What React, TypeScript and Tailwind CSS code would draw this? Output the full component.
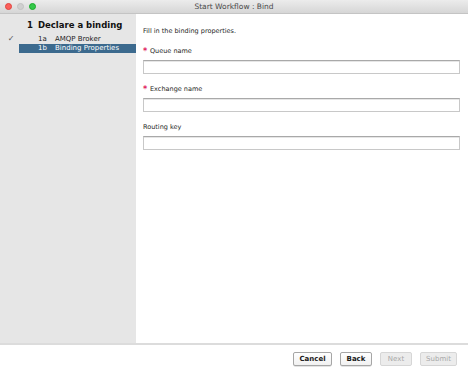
import React from "react";

const font = { fontFamily: '"DejaVu Sans", "Liberation Sans", sans-serif' };

function Field({ label, required }: { label: string; required?: boolean }) {
  return (
    <div className="flex flex-col">
      <div className="flex h-[9px] items-center text-[6.5px] leading-[9px] text-[#1d1d1d]">
        {required ? (
          <span className="w-[7px] text-[8px] font-bold leading-[9px] text-[#e0245e]">*</span>
        ) : null}
        <span>{label}</span>
      </div>
      <div className="mt-[4px] h-[14px] w-[317px] border border-[#c8c8c8] border-t-[#a9a9a9] bg-white shadow-[inset_0_1px_0_#e6e6e6]" />
    </div>
  );
}

export default function App() {
  return (
    <div className="flex h-[374px] w-[468px] flex-col overflow-hidden bg-white" style={font}>
      {/* Title bar */}
      <div className="relative flex h-[14px] shrink-0 items-center justify-center border-b border-[#c4c4c4] bg-gradient-to-b from-[#ececec] to-[#d6d6d6]">
        <div className="absolute left-[5px] top-[3px] flex gap-[5px]">
          <div className="h-[7px] w-[7px] rounded-full border-[0.5px] border-[#e0443e] bg-[#fc605c]" />
          <div className="h-[7px] w-[7px] rounded-full border-[0.5px] border-[#c2c2c2] bg-[#d0d0d0]" />
          <div className="h-[7px] w-[7px] rounded-full border-[0.5px] border-[#1aab29] bg-[#34c84a]" />
        </div>
        <span className="text-[7.5px] leading-[10px] text-[#4a4a4a]">Start Workflow : Bind</span>
      </div>

      {/* Main */}
      <div className="flex flex-1">
        {/* Sidebar */}
        <div className="flex w-[136px] shrink-0 flex-col bg-[#e6e6e6]">
          <div className="mt-[5px] flex h-[12px] items-center pl-[27px] text-[8.5px] font-bold leading-[12px] text-[#111]">
            <span className="w-[11px]">1</span>
            <span>Declare a binding</span>
          </div>
          <div className="mt-[2px] flex h-[11px] items-center text-[7px] leading-[10px] text-[#1d1d1d]">
            <span className="flex w-[19px] justify-center pl-[3px] text-[8px] text-[#555]">✓</span>
            <span className="w-[19px]"></span>
            <span className="w-[17px]">1a</span>
            <span>AMQP Broker</span>
          </div>
          <div className="ml-[19px] flex h-[9px] items-center bg-[#3c6a8e] text-[7px] leading-[9px] text-white">
            <span className="w-[19px]"></span>
            <span className="w-[17px]">1b</span>
            <span>Binding Properties</span>
          </div>
        </div>

        {/* Content */}
        <div className="flex flex-1 flex-col gap-[11px] pl-[7px] pt-[13px]">
          <div className="h-[9px] text-[6.5px] leading-[9px] text-[#1d1d1d]">Fill in the binding properties.</div>
          <Field label="Queue name" required />
          <Field label="Exchange name" required />
          <Field label="Routing key" />
        </div>
      </div>

      {/* Footer */}
      <div className="flex h-[31px] shrink-0 items-start justify-end gap-[8px] border-t-2 border-[#dcdcdc] pr-[11px] pt-[7px]">
        <div className="flex h-[14px] w-[39px] items-center justify-center rounded-[2px] border border-[#a6a6a6] bg-gradient-to-b from-white to-[#f1f1f1] text-[7px] font-bold text-[#1a1a1a] shadow-[0_0.5px_0_#c8c8c8]">
          Cancel
        </div>
        <div className="flex h-[14px] w-[32px] items-center justify-center rounded-[2px] border border-[#a6a6a6] bg-gradient-to-b from-white to-[#f1f1f1] text-[7px] font-bold text-[#1a1a1a] shadow-[0_0.5px_0_#c8c8c8]">
          Back
        </div>
        <div className="flex h-[14px] w-[32px] items-center justify-center rounded-[2px] border border-[#d6d6d6] bg-[#ececec] text-[7px] text-[#a8a8a8]">
          Next
        </div>
        <div className="flex h-[14px] w-[37px] items-center justify-center rounded-[2px] border border-[#d6d6d6] bg-[#ececec] text-[7px] text-[#a8a8a8]">
          Submit
        </div>
      </div>
    </div>
  );
}
